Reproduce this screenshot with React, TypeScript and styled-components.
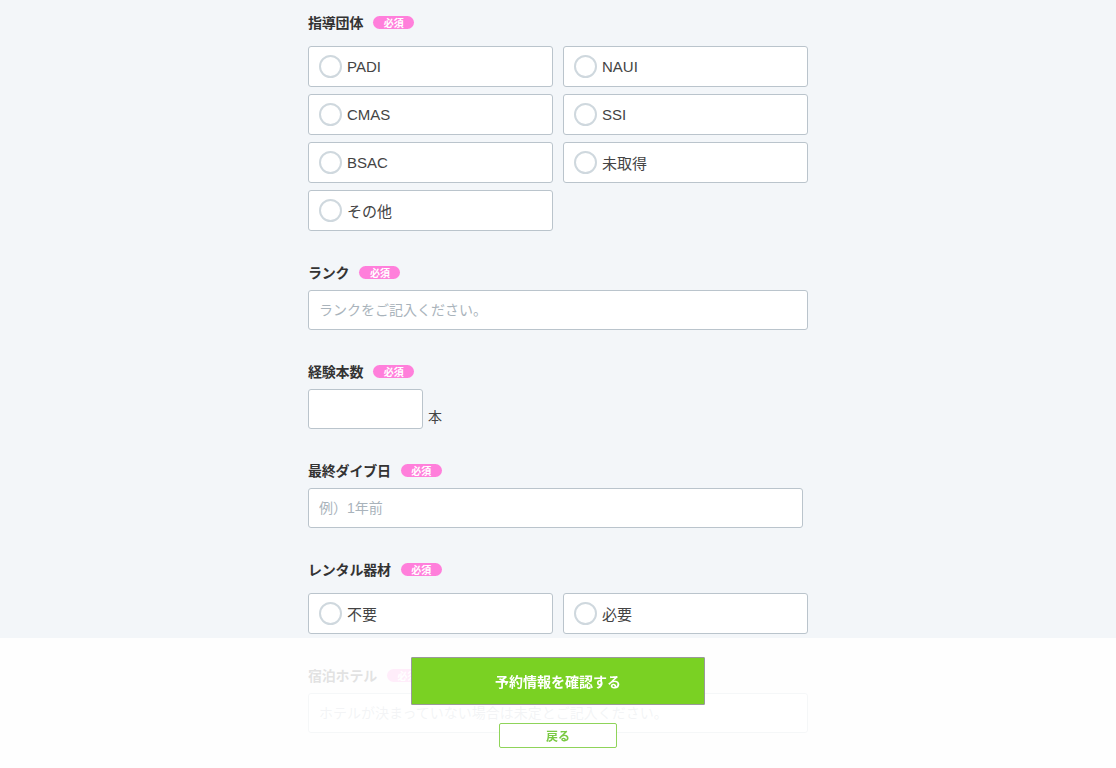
import * as React from 'react';
import styled, { createGlobalStyle } from 'styled-components';

const GlobalStyle = createGlobalStyle`
  html, body {
    margin: 0;
    padding: 0;
    background: #f3f6f9;
  }
  body {
    font-family: "Liberation Sans", "Noto Sans CJK JP", sans-serif;
    color: #333;
  }
  * {
    box-sizing: border-box;
  }
`;

const Page = styled.main`
  width: 500px;
  margin: 0 auto 0 308px;
  padding: 12px 0 160px;
`;

const Section = styled.section`
  margin-bottom: 31px;
`;

const LabelRow = styled.div`
  display: flex;
  align-items: center;
  height: 20px;
  margin-bottom: 8px;
`;

const LabelText = styled.span`
  font-family: "Noto Sans CJK JP", sans-serif;
  font-size: 14px;
  font-weight: 700;
  color: #333;
  line-height: 20px;
  letter-spacing: -0.2px;
`;

const Badge = styled.span`
  display: inline-flex;
  align-items: center;
  justify-content: center;
  width: 41px;
  height: 13px;
  margin-left: 10px;
  border-radius: 7px;
  background: #ff7fdb;
  color: #fff;
  font-family: "Noto Sans CJK JP", sans-serif;
  font-size: 10px;
  font-weight: 700;
  line-height: 13px;
`;

const OptionGrid = styled.div`
  display: grid;
  grid-template-columns: 245px 245px;
  column-gap: 10px;
  row-gap: 7px;
  margin-top: 14px;
`;

const Option = styled.label`
  display: flex;
  align-items: center;
  height: 41px;
  padding-left: 10px;
  background: #fff;
  border: 1px solid #bac4cc;
  border-radius: 3px;
  font-family: "Liberation Sans", "Noto Sans CJK JP", sans-serif;
  font-size: 15px;
  color: #444;
  cursor: pointer;
`;

const Circle = styled.span`
  width: 23px;
  height: 23px;
  margin-right: 5px;
  border: 2px solid #cfd8de;
  border-radius: 50%;
  background: #fff;
  flex-shrink: 0;
`;

const TextInput = styled.input<{ $width?: number }>`
  display: block;
  width: ${({ $width }) => ($width ? `${$width}px` : '100%')};
  height: 40px;
  padding: 0 10px;
  background: #fff;
  border: 1px solid #bac4cc;
  border-radius: 3px;
  font-family: "Liberation Sans", "Noto Sans CJK JP", sans-serif;
  font-size: 14px;
  color: #333;
  outline: none;

  &::placeholder {
    color: #a9b3bb;
  }
`;

const InlineField = styled.div`
  display: flex;
  align-items: flex-end;
  gap: 5px;
`;

const Unit = styled.span`
  font-family: "Noto Sans CJK JP", sans-serif;
  font-size: 14px;
  color: #444;
  padding-bottom: 3px;
`;

const Footer = styled.footer`
  position: fixed;
  left: 0;
  right: 0;
  bottom: 0;
  height: 130px;
  padding-top: 19px;
  display: flex;
  flex-direction: column;
  align-items: center;
  gap: 18px;
  background: rgba(255, 255, 255, 0.86);
`;

const SubmitButton = styled.button`
  width: 294px;
  height: 48px;
  background: #7ad123;
  border: 1px solid #9a9a9a;
  border-radius: 1px;
  color: #fff;
  font-family: "Noto Sans CJK JP", sans-serif;
  font-size: 14px;
  font-weight: 700;
  cursor: pointer;
`;

const BackButton = styled.button`
  width: 118px;
  height: 25px;
  background: #fff;
  border: 1px solid #8fd45a;
  border-radius: 2px;
  color: #7ac943;
  font-family: "Noto Sans CJK JP", sans-serif;
  font-size: 12px;
  font-weight: 700;
  cursor: pointer;
`;

const Label: React.FC<{ text: string }> = ({ text }) => (
  <LabelRow>
    <LabelText>{text}</LabelText>
    <Badge>必須</Badge>
  </LabelRow>
);

const Options: React.FC<{ items: string[] }> = ({ items }) => (
  <OptionGrid>
    {items.map(item => (
      <Option key={item}>
        <Circle />
        {item}
      </Option>
    ))}
  </OptionGrid>
);

export default function App() {
  return (
    <>
      <GlobalStyle />
      <Page>
        <Section>
          <Label text="指導団体" />
          <Options items={['PADI', 'NAUI', 'CMAS', 'SSI', 'BSAC', '未取得', 'その他']} />
        </Section>
        <Section>
          <Label text="ランク" />
          <TextInput placeholder="ランクをご記入ください。" />
        </Section>
        <Section>
          <Label text="経験本数" />
          <InlineField>
            <TextInput $width={115} />
            <Unit>本</Unit>
          </InlineField>
        </Section>
        <Section>
          <Label text="最終ダイブ日" />
          <TextInput $width={495} placeholder="例）1年前" />
        </Section>
        <Section>
          <Label text="レンタル器材" />
          <Options items={['不要', '必要']} />
        </Section>
        <Section>
          <Label text="宿泊ホテル" />
          <TextInput placeholder="ホテルが決まっていない場合は未定とご記入ください。" />
        </Section>
      </Page>
      <Footer>
        <SubmitButton>予約情報を確認する</SubmitButton>
        <BackButton>戻る</BackButton>
      </Footer>
    </>
  );
}
